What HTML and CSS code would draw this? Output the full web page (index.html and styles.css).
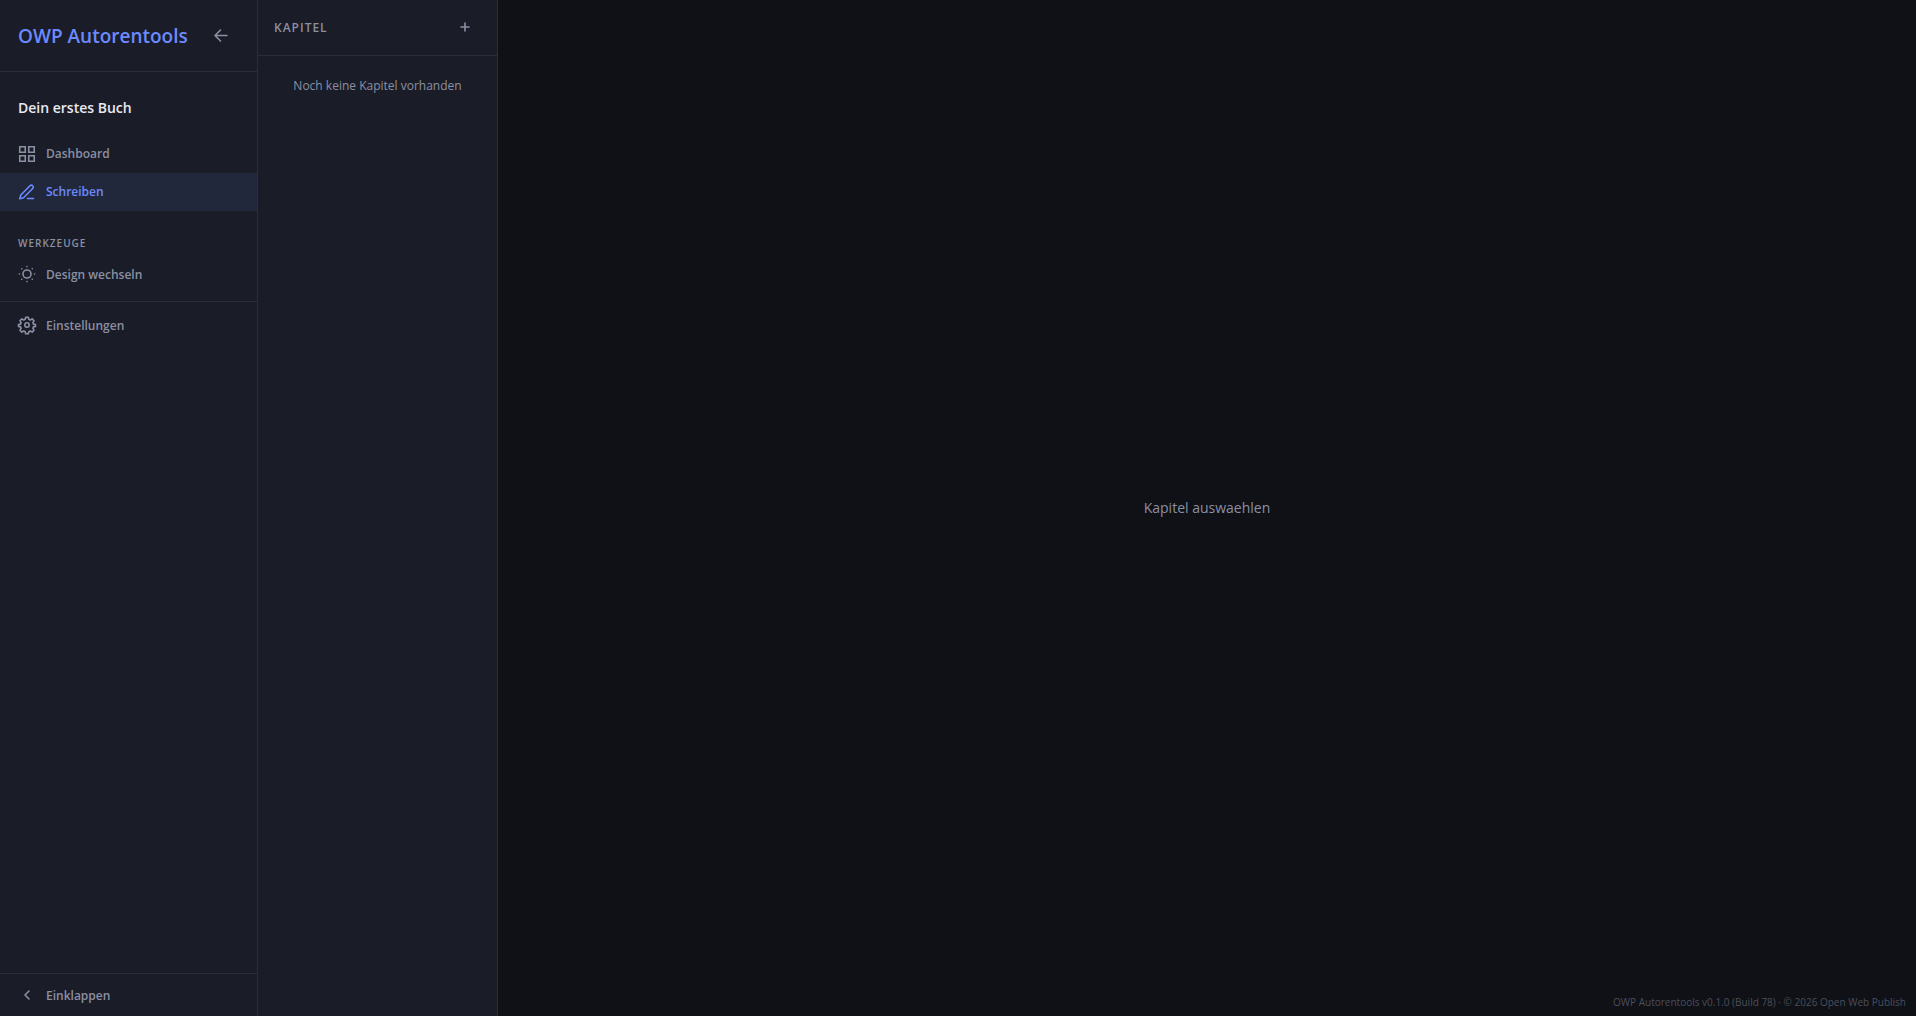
FILE: index.html
```html
<!DOCTYPE html>
<html lang="de">
<head>
<meta charset="utf-8">
<title>OWP Autorentools</title>
<link rel="stylesheet" href="styles.css">
</head>
<body>
<div class="app">
  <aside class="sidebar">
    <header class="sidebar-header">
      <h1 class="brand">OWP Autorentools</h1>
      <button class="icon-button" type="button" aria-label="Zurück">
        <svg class="icon-small" viewBox="0 0 16 16"><path d="M14 7.500H2M7.500 2L2 7.500 7.500 13"/></svg>
      </button>
    </header>
    <nav class="nav">
      <h2 class="book-title">Dein erstes Buch</h2>
      <a class="nav-item" href="#dashboard">
        <svg class="icon" viewBox="0 0 18 18"><path class="sharp" d="M1.750 1.750h5.500v5.500h-5.500zM10.750 1.750h5.500v5.500h-5.500zM1.750 10.750h5.500v5.500h-5.500zM10.750 10.750h5.500v5.500h-5.500z"/></svg>
        <span>Dashboard</span>
      </a>
      <a class="nav-item active" href="#schreiben">
        <svg class="icon" viewBox="0 0 18 18"><path d="M9.500 15.500h6M12 2.800a1.900 1.900 0 0 1 2.700 2.700L5.500 14.700l-3.700 1 1-3.700z"/></svg>
        <span>Schreiben</span>
      </a>
      <h3 class="group-title">Werkzeuge</h3>
      <button class="nav-item" type="button">
        <svg class="icon" viewBox="0 0 18 18"><circle cx="9" cy="8" r="4"/><path d="M9 .5v.1M9 15.500v.1M1.400 8h.1M16.500 8h.1M3.700 2.700h.1M14.200 2.700h.1M3.700 13.300h.1M14.200 13.300h.1"/></svg>
        <span>Design wechseln</span>
      </button>
      <hr class="divider">
      <a class="nav-item" href="#einstellungen">
        <svg class="icon" viewBox="0 0 18 18"><circle cx="9" cy="8" r="2.200"/><path d="M7.700.3h2.600l.5 2 1.500.7 1.900-1.100 1.800 1.900-1.100 1.800.6 1.500 2 .5v1.800l-2 .5-.6 1.500 1.100 1.800-1.800 1.900-1.900-1.100-1.500.7-.5 2H7.700l-.5-2-1.500-.7-1.900 1.100L2 13.200l1.100-1.800-.6-1.500-2-.5V7.600l2-.5.6-1.500L2 3.800l1.800-1.900L5.700 3l1.500-.7z"/></svg>
        <span>Einstellungen</span>
      </a>
    </nav>
    <footer class="sidebar-footer">
      <button class="nav-item" type="button">
        <svg class="icon" viewBox="0 0 18 18"><path d="M11 4L7 8l4 4"/></svg>
        <span>Einklappen</span>
      </button>
    </footer>
  </aside>
  <section class="chapters">
    <header class="chapters-header">
      <h2 class="chapters-title">Kapitel</h2>
      <button class="icon-button" type="button" aria-label="Kapitel hinzufügen">
        <svg class="icon-small" viewBox="0 0 16 16"><path d="M8 3v8M4 7h8"/></svg>
      </button>
    </header>
    <p class="chapters-empty">Noch keine Kapitel vorhanden</p>
  </section>
  <main class="editor">
    <p class="editor-empty">Kapitel auswaehlen</p>
    <p class="version">OWP Autorentools v0.1.0 (Build 78) · © 2026 Open Web Publish</p>
  </main>
</div>
</body>
</html>
```
FILE: styles.css
```css
:root {
  --panel: #1a1d27;
  --page: #0f1117;
  --line: #2a2d3a;
  --muted: #8b8fa3;
  --accent: #6c8aff;
}

* {
  box-sizing: border-box;
  margin: 0;
  padding: 0;
}

body {
  background: var(--page);
  color: var(--muted);
  font: 14px/20px "Segoe UI", "Open Sans", "Noto Sans", sans-serif;
}

button {
  background: none;
  border: 0;
  color: inherit;
  font: inherit;
  cursor: pointer;
}

svg {
  fill: none;
  stroke: currentColor;
  stroke-width: 1.6;
  stroke-linecap: round;
  stroke-linejoin: round;
  flex: none;
  overflow: visible;
}

.sharp {
  stroke-linejoin: miter;
}

.app {
  display: flex;
  min-height: 100vh;
}

.sidebar {
  display: flex;
  flex-direction: column;
  flex: 0 0 258px;
  background: var(--panel);
  border-right: 1px solid var(--line);
}

.sidebar-header {
  display: flex;
  align-items: center;
  justify-content: space-between;
  height: 72px;
  padding: 0 24px 0 18px;
  border-bottom: 1px solid var(--line);
}

.brand {
  color: var(--accent);
  font-size: 19px;
  line-height: 28px;
  font-weight: 600;
  white-space: nowrap;
}

.icon-button {
  display: flex;
  padding: 4px;
}

.icon-small {
  width: 16px;
  height: 16px;
}

.nav {
  flex: 1;
}

.book-title {
  padding: 25px 18px 16px;
  color: #e8e9f0;
  font-size: 14px;
  line-height: 22px;
  font-weight: 600;
}

.nav-item {
  display: flex;
  align-items: center;
  gap: 10px;
  width: 100%;
  height: 38px;
  padding: 0 18px;
  color: var(--muted);
  font-size: 12px;
  font-weight: 600;
  text-decoration: none;
}

.active {
  background: #22283c;
  color: var(--accent);
}

.icon {
  width: 18px;
  height: 18px;
}

.group-title {
  padding: 24px 18px 5px;
  font-size: 10px;
  line-height: 16px;
  font-weight: 600;
  letter-spacing: 1px;
  text-transform: uppercase;
}

.divider {
  margin: 7px 0 5px;
  border: 0;
  border-top: 1px solid var(--line);
}

.sidebar-footer {
  padding: 3px 0 1px;
  border-top: 1px solid var(--line);
}

.chapters {
  flex: 0 0 240px;
  background: var(--panel);
  border-right: 1px solid var(--line);
}

.chapters-header {
  display: flex;
  align-items: center;
  justify-content: space-between;
  height: 56px;
  padding: 0 20px 0 16px;
  border-bottom: 1px solid var(--line);
}

.chapters-title {
  font-size: 12px;
  font-weight: 600;
  letter-spacing: 1px;
  text-transform: uppercase;
}

.chapters-empty {
  padding: 20px 16px;
  font-size: 12px;
  text-align: center;
}

.editor {
  position: relative;
  display: flex;
  flex: 1;
  align-items: center;
  justify-content: center;
}

.version {
  position: absolute;
  right: 10px;
  bottom: 4px;
  color: #4c4e5a;
  font-size: 10px;
}
```
